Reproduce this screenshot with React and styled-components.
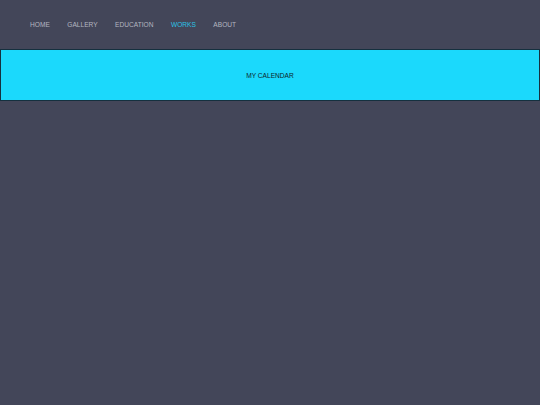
import React from "react";
import styled, { createGlobalStyle } from "styled-components";

const GlobalStyle = createGlobalStyle`
  html, body {
    margin: 0;
    padding: 0;
    background: #434659;
    font-family: "Liberation Sans", Arial, sans-serif;
  }
`;

const links = ["HOME", "GALLERY", "EDUCATION", "WORKS", "ABOUT"];

export default function App() {
  return (
    <Page>
      <GlobalStyle />
      <Nav>
        {links.map((l) => (
          <NavLink key={l} active={l === "WORKS" ? 1 : 0}>
            {l}
          </NavLink>
        ))}
      </Nav>
      <Banner>
        <BannerTitle>MY CALENDAR</BannerTitle>
      </Banner>
    </Page>
  );
}

const Page = styled.div`
  min-height: 405px;
  background: #434659;
`;

const Nav = styled.nav`
  display: flex;
  align-items: center;
  gap: 17.5px;
  height: 49px;
  padding-left: 30px;
`;

const NavLink = styled.a`
  font-size: 6.6px;
  color: ${(p) => (p.active ? "#2cc3e6" : "#b4b6c0")};
  text-decoration: none;
  cursor: pointer;
`;

const Banner = styled.div`
  display: flex;
  align-items: center;
  justify-content: center;
  height: 50px;
  background: #1bd9fc;
  border: 1px solid #15303f;
`;

const BannerTitle = styled.h1`
  margin: 0;
  font-size: 6.6px;
  font-weight: normal;
  color: #0d1f2a;
`;
